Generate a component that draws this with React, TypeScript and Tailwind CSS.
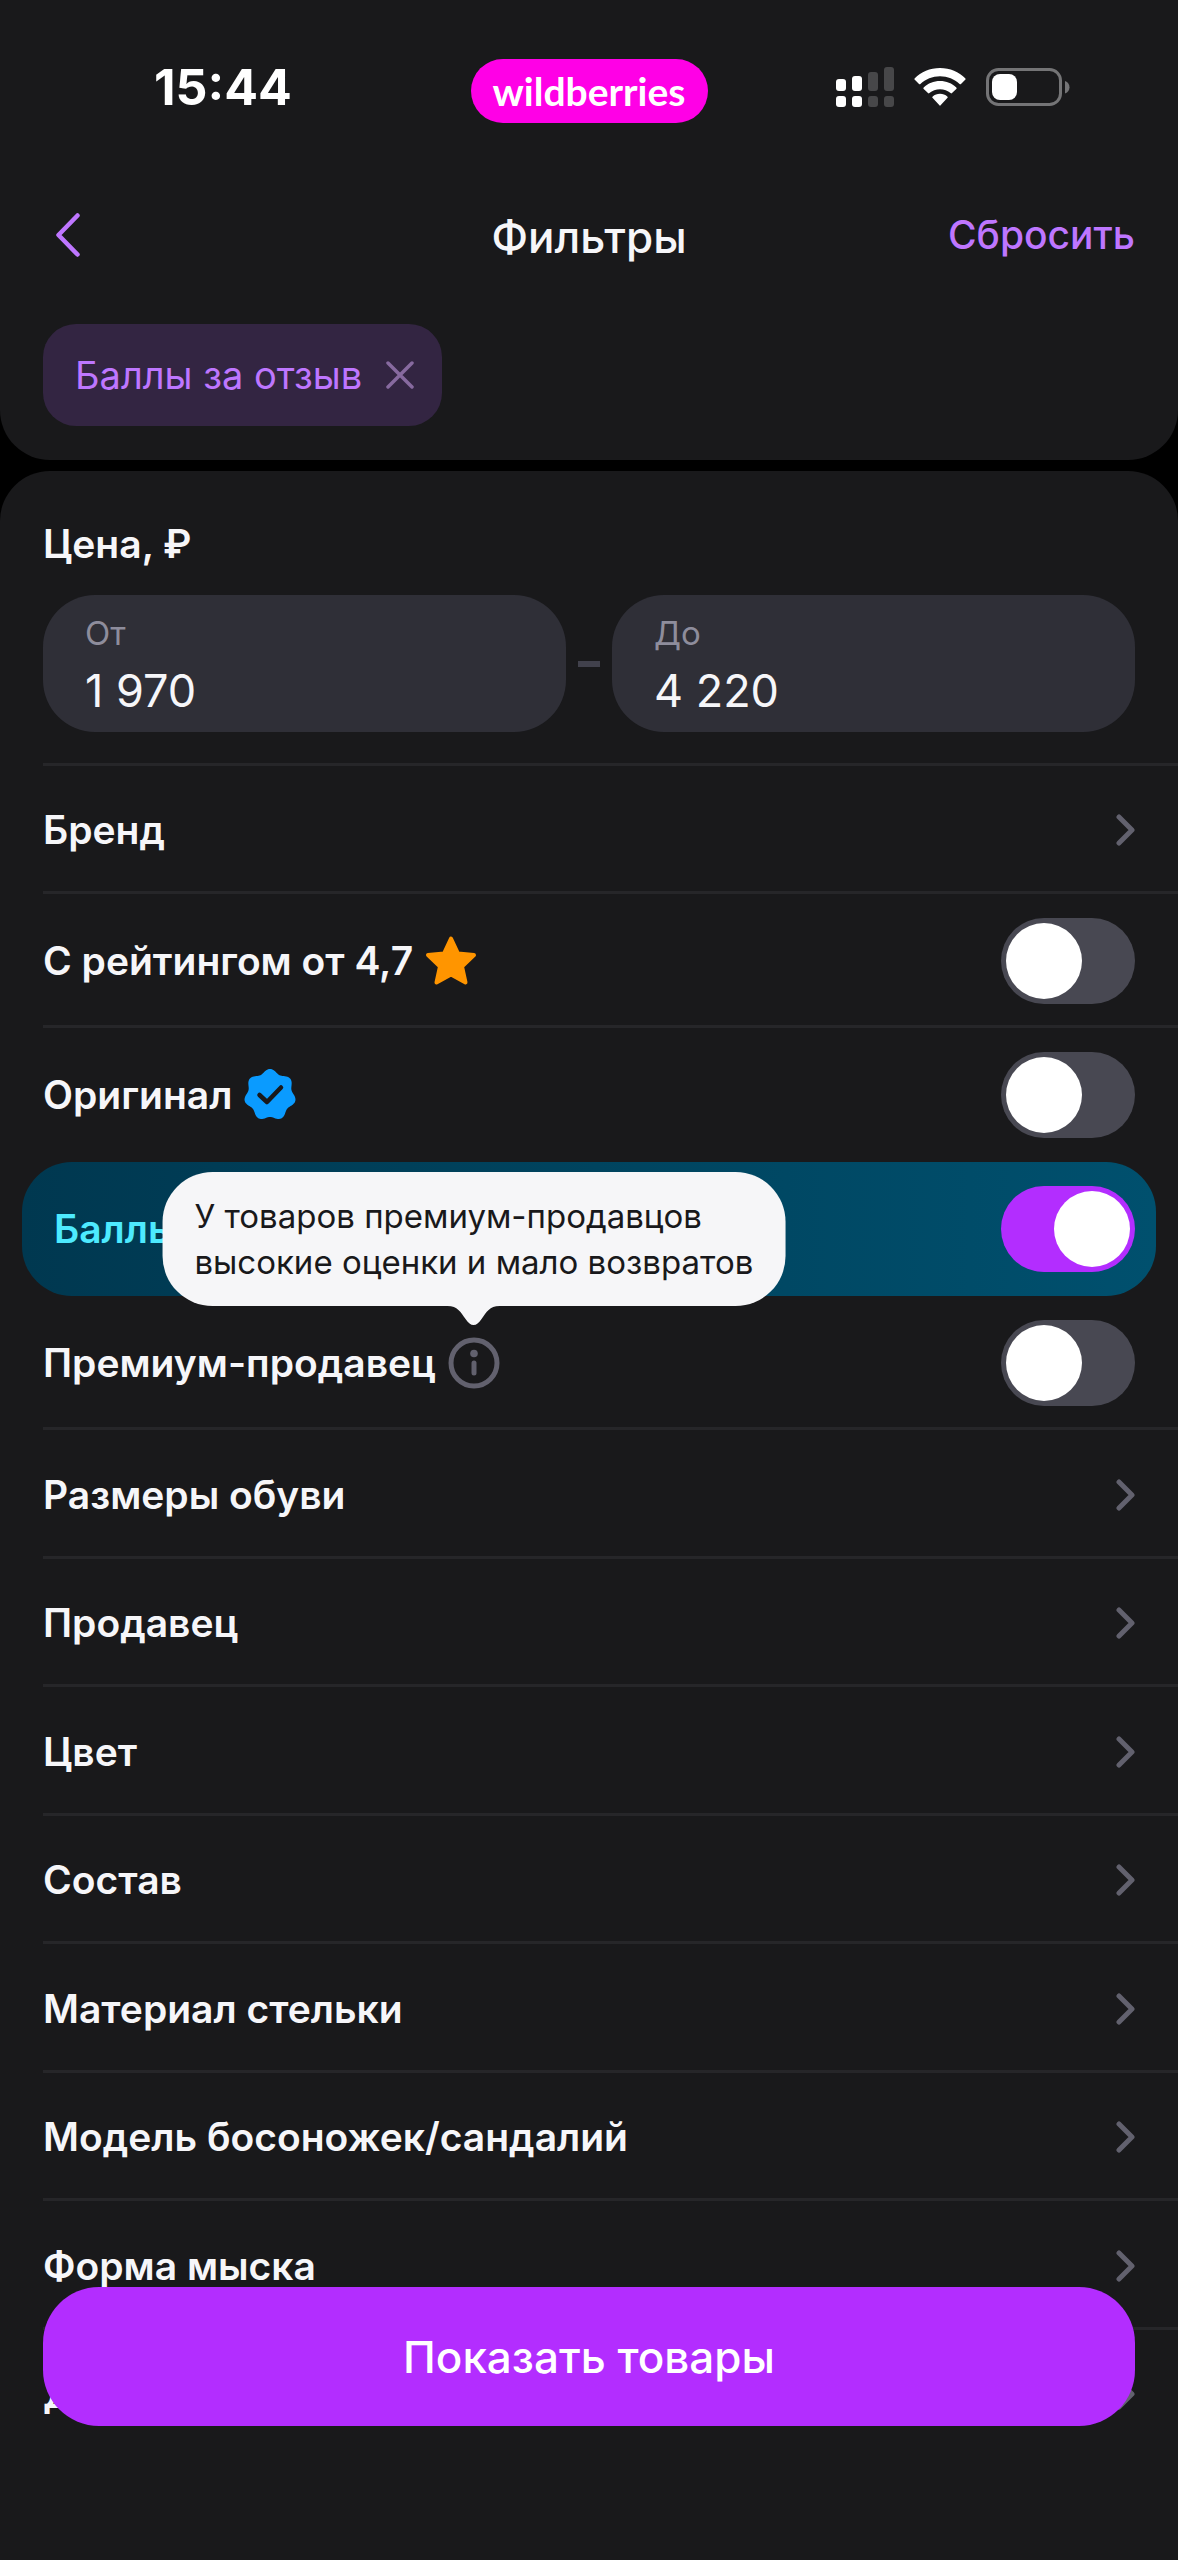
import { clsx } from "clsx"
import { useState, type ReactNode } from "react"

type ToggleKey = "rating" | "original" | "points" | "premium"

const sections = [
    "Размеры обуви",
    "Продавец",
    "Цвет",
    "Состав",
    "Материал стельки",
    "Модель босоножек/сандалий",
    "Форма мыска",
    "Декор",
]

// seven soft lobes, the first one points up
const badgePath =
    Array.from({ length: 140 }, (_, i) => {
        const angle = (i / 140) * Math.PI * 2
        const r = 24 + 2 * Math.cos(angle * 7)
        const x = 26 + r * Math.sin(angle)
        const y = 26 - r * Math.cos(angle)
        return `${i === 0 ? "M" : "L"}${x.toFixed(2)} ${y.toFixed(2)}`
    }).join("") + "Z"

function StarIcon() {
    return (
        <svg viewBox="0 0 52 52" className="size-[52px]" aria-hidden="true">
            <path
                d="M26 3.5 33 18.5 49 20 37 31.5 40.5 47.5 26 39.5 11.5 47.5 15 31.5 3 20 19 18.5Z"
                fill="#ff9500"
                stroke="#ff9500"
                strokeWidth="4"
                strokeLinejoin="round"
            />
        </svg>
    )
}

function BadgeIcon() {
    return (
        <svg viewBox="0 0 52 52" className="size-[52px]" aria-hidden="true">
            <path d={badgePath} fill="#0a9bff" />
            <path
                d="m15.500 26 7.500 7L37 18.500"
                fill="none"
                stroke="#19191b"
                strokeWidth="4.5"
                strokeLinecap="round"
                strokeLinejoin="round"
            />
        </svg>
    )
}

function InfoIcon() {
    return (
        <svg viewBox="0 0 52 52" className="size-[52px]" aria-hidden="true">
            <circle
                cx="26"
                cy="26"
                r="23"
                fill="none"
                stroke="#62616e"
                strokeWidth="5"
            />
            <circle cx="26" cy="16.500" r="3.800" fill="#62616e" />
            <path
                d="M26 26V36"
                stroke="#62616e"
                strokeWidth="5"
                strokeLinecap="round"
            />
        </svg>
    )
}

function ChevronIcon() {
    return (
        <svg
            viewBox="0 0 20 32"
            className="h-8 w-5 shrink-0"
            fill="none"
            aria-hidden="true"
        >
            <path
                d="M4 3 17 16 4 29"
                stroke="#62616e"
                strokeWidth="5"
                strokeLinecap="round"
                strokeLinejoin="round"
            />
        </svg>
    )
}

function SignalIcon() {
    return (
        <svg viewBox="0 0 58 42" className="h-[42px] w-[58px]" aria-hidden="true">
            <g fill="#fff">
                <rect x="0" y="13" width="10" height="12" rx="3" />
                <rect x="16" y="10" width="10" height="15" rx="3" />
                <rect x="0" y="30" width="10" height="11" rx="3" />
                <rect x="16" y="30" width="10" height="11" rx="3" />
            </g>
            <g fill="#474749">
                <rect x="32" y="6" width="10" height="19" rx="3" />
                <rect x="48" y="1" width="10" height="24" rx="3" />
                <rect x="32" y="30" width="10" height="11" rx="3" />
                <rect x="48" y="30" width="10" height="11" rx="3" />
            </g>
        </svg>
    )
}

function WifiIcon() {
    return (
        <svg viewBox="0 0 52 38" className="h-[38px] w-[52px]" aria-hidden="true">
            <g fill="#fff">
                <path d="M26 0C36 0 45 4 51.200 10.200a1 1 0 0 1 0 1.500L47 16a1 1 0 0 1-1.400 0C40.500 11.200 33.500 8.300 26 8.300S11.500 11.200 6.400 16A1 1 0 0 1 5 16L.8 11.700a1 1 0 0 1 0-1.500C7 4 16 0 26 0Z" />
                <path d="M26 13c6.300 0 12 2.400 16.300 6.400a1 1 0 0 1 0 1.500L38 25.100a1 1 0 0 1-1.400 0C33.800 22.600 30 21.200 26 21.200s-7.800 1.400-10.600 3.900a1 1 0 0 1-1.400 0L9.700 20.900a1 1 0 0 1 0-1.500C14 15.400 19.700 13 26 13Z" />
                <path d="M26 25.800c2.800 0 5.400 1 7.300 2.700a1 1 0 0 1 0 1.500l-6.500 7.100a1 1 0 0 1-1.600 0L18.700 30a1 1 0 0 1 0-1.500c1.900-1.700 4.500-2.700 7.300-2.700Z" />
            </g>
        </svg>
    )
}

function BatteryIcon() {
    return (
        <svg viewBox="0 0 84 40" className="h-10 w-[84px]" aria-hidden="true">
            <rect
                x="1.500"
                y="2.500"
                width="73"
                height="35"
                rx="11"
                fill="none"
                stroke="#747476"
                strokeWidth="3"
            />
            <rect x="6" y="7" width="25" height="26" rx="8" fill="#fff" />
            <path d="M79 14c3 1 4.500 3.500 4.500 6.200S82 25.400 79 26.400Z" fill="#747476" />
        </svg>
    )
}

function SectionRow({ title, className }: { title: string; className?: string }) {
    return (
        <button
            type="button"
            className={clsx(
                "ml-[43px] flex items-center justify-between border-y-3 border-t-transparent border-b-[#262629] pr-[43px] text-left",
                className,
            )}
        >
            <span className="text-[39px] leading-12 font-semibold">{title}</span>
            <ChevronIcon />
        </button>
    )
}

type ToggleRowProps = {
    id: string
    title: string
    checked: boolean
    onChange: () => void
    className?: string
    children?: ReactNode
}

function ToggleRow({
    id,
    title,
    checked,
    onChange,
    className,
    children,
}: ToggleRowProps) {
    return (
        <div className={clsx("flex h-[134px] items-center", className)}>
            <label htmlFor={id} className="text-[39px] leading-12 font-semibold">
                {title}
            </label>
            {children}
            <input
                id={id}
                type="checkbox"
                role="switch"
                checked={checked}
                onChange={onChange}
                className="ml-auto flex h-[86px] w-[134px] shrink-0 appearance-none items-center rounded-full bg-[#484852] px-[5px] before:size-[76px] before:rounded-full before:bg-white checked:bg-[#b32dff] checked:before:translate-x-12"
            />
        </div>
    )
}

function PriceField({
    id,
    label,
    defaultValue,
}: {
    id: string
    label: string
    defaultValue: string
}) {
    return (
        <div className="flex min-w-0 flex-1 flex-col gap-2 rounded-[52px] bg-[#2f2f37] px-[42px] pt-4 pb-[13px]">
            <label htmlFor={id} className="text-[33px] leading-11 text-[#8e8d9c]">
                {label}
            </label>
            <input
                id={id}
                type="text"
                inputMode="numeric"
                defaultValue={defaultValue}
                className="h-14 w-full bg-transparent text-[45px] leading-14 outline-none"
            />
        </div>
    )
}

export default function App() {
    const [toggles, setToggles] = useState<Record<ToggleKey, boolean>>({
        rating: false,
        original: false,
        points: true,
        premium: false,
    })

    const toggle = (key: ToggleKey) =>
        setToggles((prev) => ({ ...prev, [key]: !prev[key] }))

    return (
        <div className="flex min-h-screen flex-col gap-[11px] bg-black font-['Inter','Liberation_Sans',sans-serif] text-[#f6f6f9]">
            <header className="rounded-b-[50px] bg-[#19191b] pb-[34px]">
                <div className="grid h-[182px] grid-cols-[1fr_auto_1fr] items-start pt-[59px]">
                    <time className="pl-[154px] text-[50px] leading-14 font-bold text-white">
                        15:44
                    </time>
                    <div className="flex h-16 w-[237px] items-center justify-center rounded-full bg-[#ff00e6] font-['Lato',sans-serif] text-[39px] leading-12 font-bold text-white">
                        wildberries
                    </div>
                    <div className="flex h-14 items-center justify-end gap-5 pr-[108px]">
                        <SignalIcon />
                        <WifiIcon />
                        <BatteryIcon />
                    </div>
                </div>

                <div className="grid h-[106px] grid-cols-[1fr_auto_1fr] items-center px-[43px]">
                    <button
                        type="button"
                        aria-label="Назад"
                        className="justify-self-start pl-3"
                    >
                        <svg
                            viewBox="0 0 26 46"
                            className="h-[46px] w-[26px]"
                            fill="none"
                            aria-hidden="true"
                        >
                            <path
                                d="M22.500 3.500 3.500 23 22.500 42.500"
                                stroke="#be76ff"
                                strokeWidth="4.5"
                                strokeLinecap="round"
                                strokeLinejoin="round"
                            />
                        </svg>
                    </button>
                    <h1 className="pt-1 text-[44px] leading-14 font-medium">Фильтры</h1>
                    <button
                        type="button"
                        className="justify-self-end text-[39px] leading-12 font-medium text-[#be76ff]"
                    >
                        Сбросить
                    </button>
                </div>

                <div className="flex px-[43px] pt-9">
                    <div className="flex h-[102px] items-center gap-6 rounded-[33px] bg-[#332542] pr-7 pl-8 text-[38px] leading-12 text-[#be76ff]">
                        Баллы за отзыв
                        <button type="button" aria-label="Убрать фильтр">
                            <svg
                                viewBox="0 0 28 28"
                                className="size-7"
                                aria-hidden="true"
                            >
                                <path
                                    d="M2 2 26 26M26 2 2 26"
                                    stroke="#876a9f"
                                    strokeWidth="3.5"
                                    strokeLinecap="round"
                                />
                            </svg>
                        </button>
                    </div>
                </div>
            </header>

            <main className="flex flex-1 flex-col rounded-t-[50px] bg-[#19191b]">
                <section className="ml-[43px] border-b-3 border-[#262629] pt-[49px] pr-[43px] pb-[31px]">
                    <h2 className="text-[39px] leading-12 font-semibold">Цена, ₽</h2>
                    <div className="mt-[27px] flex items-center gap-3">
                        <PriceField id="price-from" label="От" defaultValue="1 970" />
                        <span className="h-1.5 w-[22px] bg-[#41414c]" />
                        <PriceField id="price-to" label="До" defaultValue="4 220" />
                    </div>
                </section>

                <SectionRow title="Бренд" className="h-[128px]" />

                <ToggleRow
                    id="rating"
                    title="С рейтингом от 4,7"
                    checked={toggles.rating}
                    onChange={() => toggle("rating")}
                    className="ml-[43px] gap-3 border-y-3 border-t-transparent border-b-[#262629] pr-[43px]"
                >
                    <StarIcon />
                </ToggleRow>
                <ToggleRow
                    id="original"
                    title="Оригинал"
                    checked={toggles.original}
                    onChange={() => toggle("original")}
                    className="mx-[43px] gap-3"
                >
                    <BadgeIcon />
                </ToggleRow>
                <ToggleRow
                    id="points"
                    title="Баллы за отзыв"
                    checked={toggles.points}
                    onChange={() => toggle("points")}
                    className="mx-[22px] rounded-[50px] bg-linear-to-r from-[#003850] to-[#00506e] pr-[21px] pl-8 text-[#4deaff]"
                />
                <ToggleRow
                    id="premium"
                    title="Премиум-продавец"
                    checked={toggles.premium}
                    onChange={() => toggle("premium")}
                    className="ml-[43px] gap-3 border-y-3 border-t-transparent border-b-[#262629] pr-[43px]"
                >
                    <div className="relative">
                        <button
                            type="button"
                            aria-label="Подробнее"
                            aria-describedby="premium-hint"
                            className="block"
                        >
                            <InfoIcon />
                        </button>
                        <div
                            id="premium-hint"
                            role="tooltip"
                            className="absolute bottom-full left-1/2 z-10 mb-3 flex w-max -translate-x-1/2 flex-col items-center"
                        >
                            <p className="rounded-[50px] bg-[#f6f6f8] px-8 py-[21px] text-[33px] leading-[46px] text-[#19191b]">
                                У товаров премиум-продавцов
                                <br />
                                высокие оценки и мало возвратов
                            </p>
                            <svg
                                viewBox="0 0 52 19"
                                className="h-[19px] w-[52px]"
                                aria-hidden="true"
                            >
                                <path
                                    d="M0 0C10 0 13 6 18 13 21 17 23 19 26 19S31 17 34 13C39 6 42 0 52 0Z"
                                    fill="#f6f6f8"
                                />
                            </svg>
                        </div>
                    </div>
                </ToggleRow>

                {sections.map((title, i) => (
                    <SectionRow
                        key={title}
                        title={title}
                        className={clsx(
                            i % 2 ? "h-[128px]" : "h-[129px]",
                            i === sections.length - 1 && "border-b-transparent",
                        )}
                    />
                ))}
            </main>

            <div className="fixed inset-x-[43px] bottom-[134px] flex">
                <button
                    type="button"
                    className="h-[139px] flex-1 rounded-[56px] bg-[#b32dff] text-[44px] leading-14 font-medium text-white"
                >
                    Показать товары
                </button>
            </div>
        </div>
    )
}
